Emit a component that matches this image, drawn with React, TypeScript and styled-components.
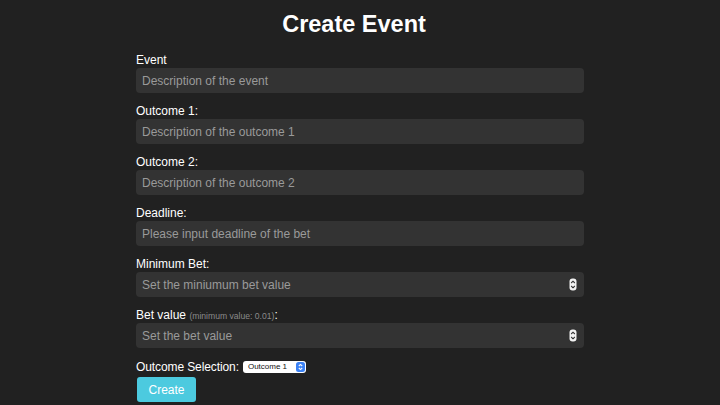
import React from "react";
import styled, { createGlobalStyle } from "styled-components";

const Global = createGlobalStyle`
  html, body { margin: 0; padding: 0; background: #212121; }
  body { font-family: "Liberation Sans", Arial, sans-serif; color: #fff; }
`;

const Page = styled.div`
  width: 720px;
  height: 405px;
  overflow: hidden;
  display: flex;
  flex-direction: column;
  align-items: center;
`;

const Title = styled.h1`
  margin: 10px 12px 13px 0;
  font-size: 23.5px;
  line-height: 28px;
  font-weight: 700;
  color: #fff;
`;

const Form = styled.form`
  width: 448px;
  display: flex;
  flex-direction: column;
`;

const Group = styled.div`
  display: flex;
  flex-direction: column;
  margin-bottom: 9px;
`;

const Label = styled.label`
  font-size: 12px;
  line-height: 18px;
  height: 17px;
  color: #fff;
`;

const Hint = styled.span`
  font-size: 8.6px;
  color: #8a8a8a;
`;

const Field = styled.div`
  position: relative;
  height: 25px;
  background: #333333;
  border-radius: 4px;
  display: flex;
  align-items: center;
  padding: 0 6px;
`;

const Input = styled.input`
  flex: 1;
  background: transparent;
  border: none;
  outline: none;
  font-family: "Liberation Sans", Arial, sans-serif;
  font-size: 12px;
  color: #fff;
  padding: 0;
  &::placeholder { color: #9a9a9a; }
`;

const SpinBox = styled.svg`
  width: 8px;
  height: 13px;
  margin-right: 1px;
  flex: none;
`;

const SelectRow = styled.div`
  display: flex;
  align-items: center;
  gap: 4px;
  height: 19px;
  margin-bottom: 1px;
`;

const SelLabel = styled.span`
  font-size: 12px;
  color: #fff;
  letter-spacing: -0.1px;
`;

const Select = styled.div`
  width: 63px;
  height: 12px;
  background: #fff;
  border-radius: 3px;
  display: flex;
  align-items: center;
  justify-content: space-between;
  padding: 0 1px 0 5px;
  box-sizing: border-box;
`;

const SelText = styled.span`
  font-size: 8px;
  color: #111;
  line-height: 12px;
`;

const SelBtn = styled.svg`
  width: 9px;
  height: 10px;
`;

const Button = styled.button`
  align-self: flex-start;
  margin-left: 1px;
  width: 59px;
  height: 25px;
  background: #4ccadf;
  border: none;
  border-radius: 3px;
  color: #fff;
  font-family: "Liberation Sans", Arial, sans-serif;
  font-size: 12px;
  padding: 0;
`;

const Spin = () => (
  <SpinBox viewBox="0 0 8 13">
    <rect x="0.5" y="0.5" width="7" height="12" rx="3" fill="#f2f2f2" />
    <path d="M2.2 5 L4 3.2 L5.8 5" stroke="#333" strokeWidth="1.1" fill="none" />
    <path d="M2.2 8 L4 9.8 L5.8 8" stroke="#333" strokeWidth="1.1" fill="none" />
  </SpinBox>
);

const fields: { label: React.ReactNode; ph: string; spin?: boolean }[] = [
  { label: "Event", ph: "Description of the event" },
  { label: "Outcome 1:", ph: "Description of the outcome 1" },
  { label: "Outcome 2:", ph: "Description of the outcome 2" },
  { label: "Deadline:", ph: "Please input deadline of the bet" },
  { label: "Minimum Bet:", ph: "Set the miniumum bet value", spin: true },
  {
    label: (
      <>
        Bet value <Hint>(minimum value: 0.01)</Hint>:
      </>
    ),
    ph: "Set the bet value",
    spin: true,
  },
];

export default function App() {
  return (
    <Page>
      <Global />
      <Title>Create Event</Title>
      <Form onSubmit={(e) => e.preventDefault()}>
        {fields.map((f, i) => (
          <Group key={i}>
            <Label>{f.label}</Label>
            <Field>
              <Input placeholder={f.ph} />
              {f.spin && <Spin />}
            </Field>
          </Group>
        ))}
        <SelectRow>
          <SelLabel>Outcome Selection:</SelLabel>
          <Select>
            <SelText>Outcome 1</SelText>
            <SelBtn viewBox="0 0 9 10">
              <rect x="0" y="0" width="9" height="10" rx="2.5" fill="#3b82f6" />
              <path d="M2.8 4 L4.5 2.4 L6.2 4" stroke="#fff" strokeWidth="1.1" fill="none" />
              <path d="M2.8 6 L4.5 7.6 L6.2 6" stroke="#fff" strokeWidth="1.1" fill="none" />
            </SelBtn>
          </Select>
        </SelectRow>
        <Button type="submit">Create</Button>
      </Form>
    </Page>
  );
}
